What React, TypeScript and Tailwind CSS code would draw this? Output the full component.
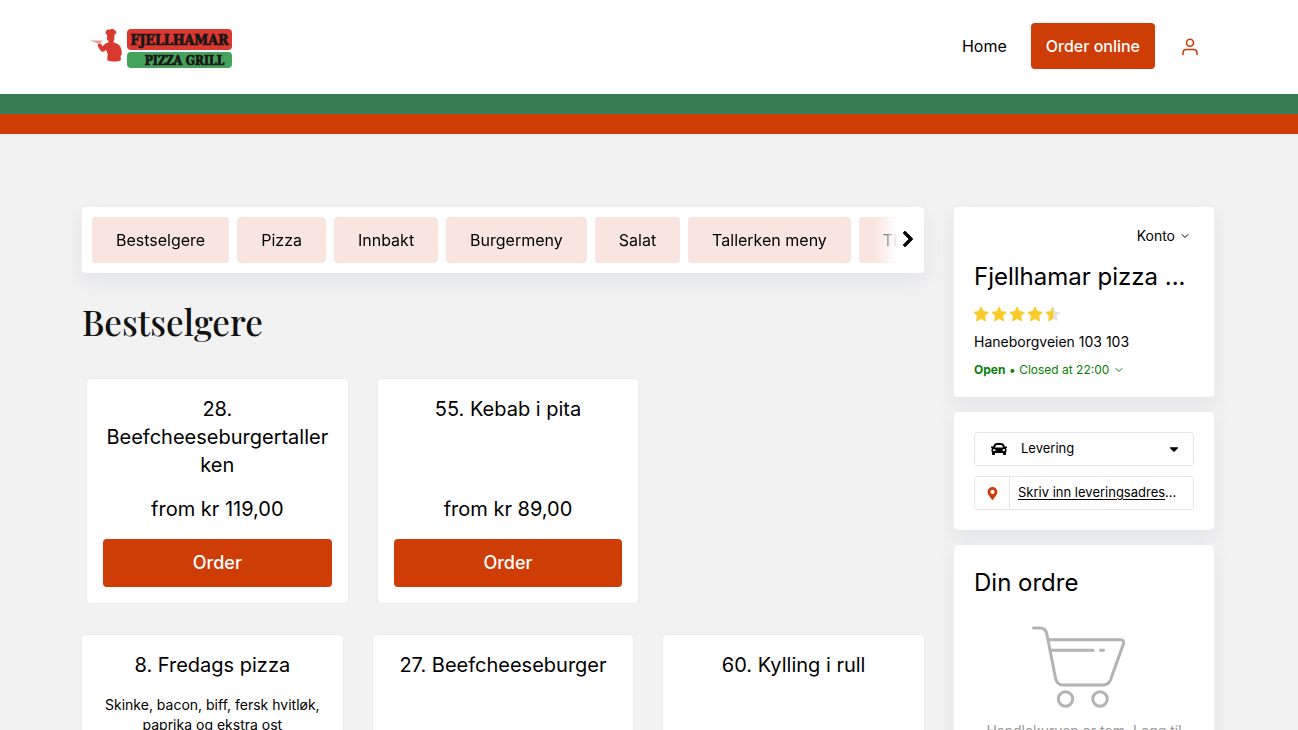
import { ChevronDown } from "lucide-react";
import { FaCar, FaCaretDown, FaChevronRight, FaMapMarkerAlt } from "react-icons/fa";

const categories = ["Bestselgere", "Pizza", "Innbakt", "Burgermeny", "Salat", "Tallerken meny", "Tilbehør"];

const panel = "rounded bg-white shadow-[0_8px_20px_rgba(30,45,90,0.07)]";

const starPath =
  "M7.5 0.6 L9.6 4.9 L14.4 5.6 L10.9 9 L11.8 13.8 L7.5 11.5 L3.2 13.8 L4.1 9 L0.6 5.6 L5.4 4.9 Z";

function Logo() {
  return (
    <svg width="144" height="42" viewBox="0 0 144 42" role="img" aria-label="Fjellhamar Pizza Grill">
      <rect x="37" y="1" width="105" height="21" rx="4" fill="#dc3832" />
      <rect x="37" y="24" width="105" height="16" rx="4" fill="#44a25c" />
      <g fill="#1c1616" stroke="#1c1616" strokeWidth="0.7" fontWeight="700">
        <text x="89.5" y="17" textAnchor="middle" fontSize="14" fontFamily="'DejaVu Serif Condensed', 'DejaVu Serif', serif">
          FJELLHAMAR
        </text>
        <text x="94.5" y="36.5" textAnchor="middle" fontSize="12" fontFamily="'DejaVu Serif Condensed', 'DejaVu Serif', serif">
          PIZZA GRILL
        </text>
      </g>
      <g fill="#d93a2f">
        <path d="M16 3.5 C16 1.5 18.5 1.2 19.5 1.8 C21 0.2 24.5 1 24.8 2.6 C27 3.2 26.3 6 24.6 6.6 L24.4 9.5 C24.8 12 23.5 13 23.4 14.2 L27.5 16 C30.5 17 32 22 31.8 26.5 L30.5 28 L31 32 C28 34 21 34 17.2 32 L17.6 26 L16 21.5 C14.5 24 12 24.6 10.5 22.5 L7.5 17.8 L8.5 15.4 L10.8 15.4 L12.6 18.6 C13.8 15.8 16.5 15.2 18.5 14.4 L18.3 12.6 L17 12 L17.2 7 C15.5 6.2 15 4.6 16 3.5 Z" />
        <path d="M0 12.5 L13 12.5 L11 14.4 L7.5 15.6 L4 14 Z" opacity="0.5" />
      </g>
    </svg>
  );
}

function Stars() {
  return (
    <div className="flex gap-[3px]" role="img" aria-label="4.5 / 5">
      {[1, 1, 1, 1, 0.5].map((fill, i) => (
        <svg key={i} width="15" height="15" viewBox="0.8 0.6 14.2 14.2">
          <path d={starPath} fill="#e3e3e3" strokeLinejoin="round" />
          <clipPath id={`star-${i}`}>
            <rect width={15 * fill} height="15" />
          </clipPath>
          <path
            d={starPath}
            fill="#fbcb26"
            stroke="#fbcb26"
            strokeWidth="0.8"
            strokeLinejoin="round"
            clipPath={`url(#star-${i})`}
          />
        </svg>
      ))}
    </div>
  );
}

function CartIcon() {
  return (
    <svg width="96" height="84" viewBox="0 0 96 84" fill="none" stroke="#b3b3b3" strokeWidth="3" strokeLinecap="round">
      <path d="M2.5 3 H9 C13 3 15 5 15.8 9 L24.5 53 C25.4 58 27.5 60 32 60 H72 C76 60 78 58.5 79.5 55 L92.4 19 C93.4 16.5 92 14.7 89.5 14.7 H18" />
      <path d="M20 25.3 H62" />
      <path d="M69.5 25.3 H72.5" />
      <circle cx="34.5" cy="74" r="7.2" />
      <circle cx="69" cy="74" r="7.2" />
    </svg>
  );
}

function ProductCard({ title, description, price }: { title: string; description?: string; price?: string }) {
  return (
    <article className="flex flex-col rounded bg-white p-4 text-center shadow-[0_0_0_1px_#ededed]">
      <h3 className="min-h-[84px] text-xl leading-7 wrap-break-word">
        {title}
        {description && <span className="mt-4 block text-sm leading-5">{description}</span>}
      </h3>
      {price && (
        <>
          <p className="mt-4 text-xl leading-7">{price}</p>
          <button type="button" className="mt-4 h-12 rounded bg-[#cf3d07] text-lg font-medium text-white">
            Order
          </button>
        </>
      )}
    </article>
  );
}

export default function App() {
  return (
    <div className="min-h-screen bg-[#f2f2f2] font-['Inter',sans-serif] text-black">
      <header className="border-b-20 border-[#cf3d07] bg-white">
        <div className="border-b-20 border-[#377c55]">
          <div className="mx-auto flex h-[94px] max-w-[1134px] items-center justify-between pr-[15px] pl-2">
            <a href="#home" className="pt-1">
              <Logo />
            </a>
            <nav className="flex items-center gap-6 pb-0.5">
              <a href="#home" className="text-base">
                Home
              </a>
              <a href="#order" className="flex h-[46px] items-center rounded bg-[#cf3d07] px-[15px] text-base font-medium text-white">
                Order online
              </a>
              <a href="#account" aria-label="Account" className="px-0.5 pt-0.5">
                <svg width="18" height="18" viewBox="0 0 18 18" fill="none" stroke="#cf3d07" strokeWidth="1.6" strokeLinecap="round">
                  <circle cx="9" cy="4.8" r="3.5" />
                  <path d="M2 16.5 V15 C2 12.8 3.3 11.5 5.5 11.5 H12.5 C14.7 11.5 16 12.8 16 15 V16.5" />
                </svg>
              </a>
            </nav>
          </div>
        </div>
      </header>

      <div className="mx-auto flex max-w-[1134px] items-start gap-[30px] pt-[73px] pr-0.5">
        <main className="min-w-0 flex-1">
          <nav className={`flex items-center p-2.5 ${panel}`}>
            <div className="flex min-w-0 flex-1 gap-2 overflow-hidden mask-[linear-gradient(to_right,black_calc(100%-24px),transparent)]">
              {categories.map((name) => (
                <a
                  key={name}
                  href={`#${name}`}
                  className="flex h-[46px] shrink-0 items-center rounded bg-[#f9e5df] px-6 text-base whitespace-nowrap"
                >
                  {name}
                </a>
              ))}
            </div>
            <button type="button" aria-label="Next" className="flex w-4 justify-end pb-0.5">
              <FaChevronRight className="h-[18px] w-3" strokeWidth={24} />
            </button>
          </nav>

          <h2 className="mt-[22px] mb-[30px] font-['Playfair_Display','Liberation_Serif',serif] text-[35px] leading-[54px] font-medium text-[#111]">
            Bestselgere
          </h2>
          <div className="-mr-[5px] ml-[5px] grid grid-cols-3 gap-[30px]">
            <ProductCard title="28. Beefcheeseburgertallerken" price="from kr 119,00" />
            <ProductCard title="55. Kebab i pita" price="from kr 89,00" />
          </div>
          <div className="mt-8 grid grid-cols-3 gap-[30px]">
            <ProductCard title="8. Fredags pizza" description="Skinke, bacon, biff, fersk hvitløk, paprika og ekstra ost" />
            <ProductCard title="27. Beefcheeseburger" />
            <ProductCard title="60. Kylling i rull" />
          </div>
        </main>

        <aside className="flex w-[260px] shrink-0 flex-col gap-[15px]">
          <section className={`flex flex-col items-start px-5 pt-5 pb-[17px] ${panel}`}>
            <button type="button" className="flex items-center gap-1 self-end pr-[3px] text-sm leading-[18px]">
              Konto
              <ChevronDown size={12} strokeWidth={2} />
            </button>
            <h1 className="mt-3.5 text-2xl leading-9 whitespace-nowrap">Fjellhamar pizza ...</h1>
            <div className="mt-3">
              <Stars />
            </div>
            <p className="mt-2.5 text-sm leading-5">Haneborgveien 103 103</p>
            <button type="button" className="mt-2 flex items-center gap-1 text-xs leading-5 text-[#078007]">
              <b>Open</b>
              <b>•</b>
              <span>Closed at 22:00</span>
              <ChevronDown size={12} strokeWidth={2} />
            </button>
          </section>

          <section className={`flex flex-col gap-2.5 p-5 ${panel}`}>
            <label className="relative flex h-[34px] items-center rounded border border-[#e5e5e5]">
              <FaCar size={16} className="pointer-events-none absolute left-4" />
              <select aria-label="Leveringsmetode" className="h-full w-full appearance-none bg-transparent pl-[46px] text-[13px]">
                <option>Levering</option>
              </select>
              <FaCaretDown size={14} className="pointer-events-none absolute right-3" />
            </label>
            <button type="button" className="flex h-[34px] items-center rounded border border-[#e5e5e5] text-left text-[13px]">
              <span className="flex h-full w-[35px] shrink-0 items-center justify-center border-r border-[#e5e5e5]">
                <FaMapMarkerAlt size={13} color="#cf3d07" />
              </span>
              <span className="mr-4 ml-2 min-w-0 truncate">
                <span className="underline underline-offset-2">Skriv inn leveringsadres</span>...
              </span>
            </button>
          </section>

          <section className={`flex flex-col p-5 ${panel}`}>
            <h2 className="text-2xl leading-9">Din ordre</h2>
            <div className="mt-6 flex justify-center pr-2.5">
              <CartIcon />
            </div>
            <p className="mt-3 text-center text-sm leading-5 text-[#999]">Handlekurven er tom. Legg til retter fra menyen</p>
          </section>
        </aside>
      </div>
    </div>
  );
}
